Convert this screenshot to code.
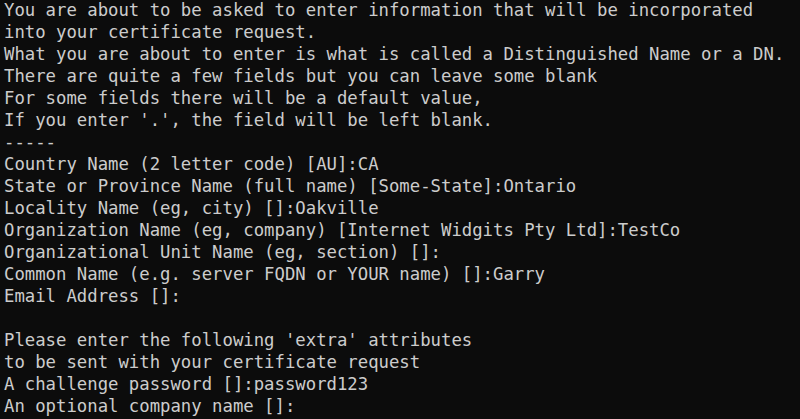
const lines = [
  'You are about to be asked to enter information that will be incorporated',
  'into your certificate request.',
  'What you are about to enter is what is called a Distinguished Name or a DN.',
  'There are quite a few fields but you can leave some blank',
  'For some fields there will be a default value,',
  "If you enter '.', the field will be left blank.",
  '-----',
  'Country Name (2 letter code) [AU]:CA',
  'State or Province Name (full name) [Some-State]:Ontario',
  'Locality Name (eg, city) []:Oakville',
  'Organization Name (eg, company) [Internet Widgits Pty Ltd]:TestCo',
  'Organizational Unit Name (eg, section) []:',
  'Common Name (e.g. server FQDN or YOUR name) []:Garry',
  'Email Address []:',
  '',
  "Please enter the following 'extra' attributes",
  'to be sent with your certificate request',
  'A challenge password []:password123',
  'An optional company name []:',
];

export default function App() {
  return (
    <div className="w-[800px] h-[419px] overflow-hidden bg-[#0c0c0c] text-[#cccccc]">
      {/* terminal output */}
      <pre className="pl-[4px] -mt-[1px] font-['DejaVu_Sans_Mono','Liberation_Mono',monospace] text-[17.3px] leading-[22px] whitespace-pre">
        {lines.map((line, i) => (
          <div key={i} className="h-[22px]">
            {line}
          </div>
        ))}
      </pre>
    </div>
  );
}
